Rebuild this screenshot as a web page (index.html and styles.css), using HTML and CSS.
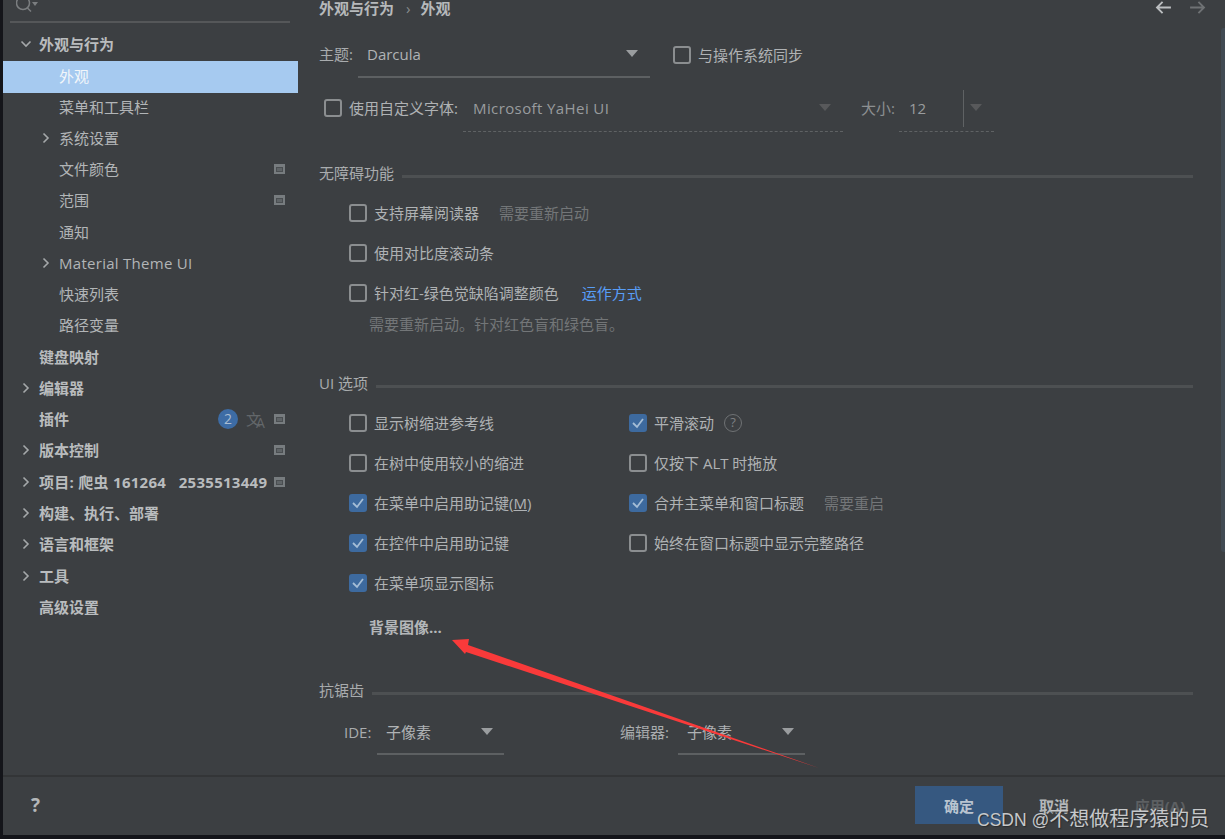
FILE: index.html
```html
<!DOCTYPE html>
<html lang="zh-CN">
<head>
    <meta charset="UTF-8">
    <title>设置 - 外观</title>
    <link rel="stylesheet" href="styles.css">
</head>
<body>
    <div class="window">
        <div class="window-body">
            <!-- Sidebar -->
            <div class="sidebar">
                <div class="search">
                    <svg class="search-icon" viewBox="0 0 26 16" xmlns="http://www.w3.org/2000/svg">
                        <circle cx="7" cy="3" r="6.5" fill="none" stroke="#7b7e80" stroke-width="1.5"/>
                        <path d="M11.5 8 L15 11.5" stroke="#7b7e80" stroke-width="1.5"/>
                        <path d="M16 2 H22 L19 6 Z" fill="#7b7e80"/>
                    </svg>
                </div>
                <div class="tree">
                    <div class="tree-row top"><svg class="chev" viewBox="0 0 12 12"><path d="M1.5 3.5 L6 8 L10.5 3.5"/></svg><span>外观与行为</span></div>
                    <div class="tree-row sub selected"><span>外观</span></div>
                    <div class="tree-row sub"><span>菜单和工具栏</span></div>
                    <div class="tree-row sub"><svg class="chev" viewBox="0 0 12 12"><path d="M3.5 1.5 L8 6 L3.5 10.5"/></svg><span>系统设置</span></div>
                    <div class="tree-row sub"><span>文件颜色</span><i class="marker"></i></div>
                    <div class="tree-row sub"><span>范围</span><i class="marker"></i></div>
                    <div class="tree-row sub"><span>通知</span></div>
                    <div class="tree-row sub"><svg class="chev" viewBox="0 0 12 12"><path d="M3.5 1.5 L8 6 L3.5 10.5"/></svg><span class="wide">Material Theme UI</span></div>
                    <div class="tree-row sub"><span>快速列表</span></div>
                    <div class="tree-row sub"><span>路径变量</span></div>
                    <div class="tree-row top"><span>键盘映射</span></div>
                    <div class="tree-row top"><svg class="chev" viewBox="0 0 12 12"><path d="M3.5 1.5 L8 6 L3.5 10.5"/></svg><span>编辑器</span></div>
                    <div class="tree-row top"><span>插件</span><b class="badge">2</b><span class="translate">文<em>A</em></span><i class="marker near"></i></div>
                    <div class="tree-row top"><svg class="chev" viewBox="0 0 12 12"><path d="M3.5 1.5 L8 6 L3.5 10.5"/></svg><span>版本控制</span><i class="marker"></i></div>
                    <div class="tree-row top"><svg class="chev" viewBox="0 0 12 12"><path d="M3.5 1.5 L8 6 L3.5 10.5"/></svg><span class="project wide">项目: 爬虫 161264   2535513449</span><i class="marker"></i></div>
                    <div class="tree-row top"><svg class="chev" viewBox="0 0 12 12"><path d="M3.5 1.5 L8 6 L3.5 10.5"/></svg><span>构建、执行、部署</span></div>
                    <div class="tree-row top"><svg class="chev" viewBox="0 0 12 12"><path d="M3.5 1.5 L8 6 L3.5 10.5"/></svg><span>语言和框架</span></div>
                    <div class="tree-row top"><svg class="chev" viewBox="0 0 12 12"><path d="M3.5 1.5 L8 6 L3.5 10.5"/></svg><span>工具</span></div>
                    <div class="tree-row top"><span>高级设置</span></div>
                </div>
            </div>

            <!-- Main Content -->
            <div class="content">
                <div class="topbar">
                    <div class="crumbs">外观与行为<span class="crumb-sep">›</span>外观</div>
                    <div class="nav-arrows">
                        <svg viewBox="0 0 18 14"><path d="M17 7 H2 M8 1 L2 7 L8 13" stroke="#bcbfc1"/></svg>
                        <svg viewBox="0 0 18 14"><path d="M1 7 H16 M10 1 L16 7 L10 13" stroke="#6f7274"/></svg>
                    </div>
                </div>

                <div class="form-row theme-row">
                    <span class="label theme-label">主题:</span>
                    <div class="select theme-select"><span>Darcula</span><i class="tri"></i></div>
                    <label class="check sync"><i class="box"></i>与操作系统同步</label>
                </div>

                <div class="form-row font-row">
                    <label class="check font-check"><i class="box"></i>使用自定义字体:</label>
                    <div class="select dashed font-select"><span class="wider">Microsoft YaHei UI</span><i class="tri dim"></i></div>
                    <span class="label size-label">大小:</span>
                    <div class="select dashed size-select"><span class="size-value">12</span><i class="divider"></i><i class="tri dim"></i></div>
                </div>

                <div class="section-title first">无障碍功能</div>
                <div class="options">
                    <label class="check"><i class="box"></i>支持屏幕阅读器<span class="hint">需要重新启动</span></label>
                    <label class="check"><i class="box"></i>使用对比度滚动条</label>
                    <label class="check"><i class="box"></i>针对红-绿色觉缺陷调整颜色<a class="link" href="#">运作方式</a></label>
                </div>
                <p class="note">需要重新启动。针对红色盲和绿色盲。</p>

                <div class="section-title ui">UI 选项</div>
                <div class="options-grid">
                    <label class="check"><i class="box"></i>显示树缩进参考线</label>
                    <label class="check"><i class="box on"><svg viewBox="0 0 18 18"><path d="M4 9 L8 13 L14 5"/></svg></i>平滑滚动<i class="help">?</i></label>
                    <label class="check"><i class="box"></i>在树中使用较小的缩进</label>
                    <label class="check"><i class="box"></i>仅按下 ALT 时拖放</label>
                    <label class="check"><i class="box on"><svg viewBox="0 0 18 18"><path d="M4 9 L8 13 L14 5"/></svg></i><span>在菜单中启用助记键(<u>M</u>)</span></label>
                    <label class="check"><i class="box on"><svg viewBox="0 0 18 18"><path d="M4 9 L8 13 L14 5"/></svg></i>合并主菜单和窗口标题<span class="hint">需要重启</span></label>
                    <label class="check"><i class="box on"><svg viewBox="0 0 18 18"><path d="M4 9 L8 13 L14 5"/></svg></i>在控件中启用助记键</label>
                    <label class="check"><i class="box"></i>始终在窗口标题中显示完整路径</label>
                    <label class="check"><i class="box on"><svg viewBox="0 0 18 18"><path d="M4 9 L8 13 L14 5"/></svg></i>在菜单项显示图标</label>
                </div>
                <div class="bg-image">背景图像...</div>

                <div class="section-title aa">抗锯齿</div>
                <div class="form-row aa-row">
                    <span class="label ide-label">IDE:</span>
                    <div class="select aa-select"><span>子像素</span><i class="tri"></i></div>
                    <span class="label editor-label">编辑器:</span>
                    <div class="select aa-select"><span>子像素</span><i class="tri"></i></div>
                </div>
            </div>
            <div class="scrollbar"></div>
        </div>

        <!-- Footer -->
        <div class="footer">
            <span class="help-mark">?</span>
            <div class="buttons">
                <button class="btn primary">确定</button>
                <button class="btn">取消</button>
                <button class="btn disabled">应用(A)</button>
            </div>
        </div>
    </div>

    <!-- annotation drawn over the screenshot -->
    <svg class="arrow" viewBox="0 0 1225 839" xmlns="http://www.w3.org/2000/svg">
        <polygon points="452,640 469,639 468,645 819,768 466,652 465,654" fill="#f93a3a"/>
    </svg>
    <div class="watermark"><span class="wm-latin">CSDN @</span>不想做程序猿的员</div>
</body>
</html>
```

FILE: styles.css
```css
* { margin: 0; padding: 0; box-sizing: border-box; }
html, body { height: 100%; overflow: hidden; }
body { background: #14151a; color: #b4b7b9; font-family: "Open Sans", "Noto Sans CJK SC", sans-serif; font-size: 15px; line-height: 24px; }
i, em { font-style: normal; }

/* Window */
.window { margin-left: 3px; height: 835px; background: #3c3f42; display: flex; flex-direction: column; }
.window-body { height: 775px; display: flex; overflow: hidden; position: relative; }
.scrollbar { position: absolute; right: 0; top: 28px; width: 4px; height: 524px; border-radius: 3px 0 0 3px; background: #414a53; }

/* Sidebar */
.sidebar { width: 295px; flex-shrink: 0; }
.search { height: 23px; margin: 0 8px 0 7px; border-bottom: 2px solid #555759; overflow: hidden; }
.search-icon { display: block; width: 26px; height: 16px; margin-left: 6px; }
.tree { padding-top: 5.4px; }
.tree-row { height: 31.28px; display: flex; align-items: center; padding-right: 13px; position: relative; color: #b2b5b7; }
.tree-row.top { padding-left: 36px; font-weight: 700; color: #b9bcbe; }
.tree-row.sub { padding-left: 56px; }
.tree-row.selected { height: 32px; margin: 1.3px 0 -2.02px; padding-bottom: 2px; background: #a6caf0; color: #f2f6fa; }
.chev { position: absolute; width: 12px; height: 12px; fill: none; stroke: #a5a8aa; stroke-width: 1.6; }
.tree-row.top .chev { left: 17px; }
.tree-row.sub .chev { left: 37px; }
.project { white-space: pre; }
.wide { letter-spacing: 0.28px; }
.wider { letter-spacing: 0.4px; }
.marker { margin-left: auto; width: 11px; height: 10px; border: 2px solid #777c7f; border-top-width: 3px; background: #5f6467; box-shadow: inset 0 0 0 1px #4a4e51; }
.marker.near { margin-left: 9px; }
.badge { margin-left: auto; width: 20px; height: 20px; border-radius: 50%; background: #3d6ca5; color: #a9bcd2; font-size: 14px; font-weight: 400; line-height: 20px; text-align: center; }
.translate { margin-left: 8px; width: 19px; font-size: 15px; font-weight: 400; color: #63676a; white-space: nowrap; letter-spacing: -5px; }
.translate em { font-size: 14px; position: relative; top: 3px; }

/* Main Content */
.content { flex: 1; padding-left: 21px; padding-right: 32px; }
.topbar { height: 16px; display: flex; justify-content: space-between; line-height: 16px; }
.crumbs { font-weight: 700; color: #b6b9bb; }
.crumb-sep { margin: 0 10px 0 12px; font-weight: 400; color: #8a8d8f; }
.nav-arrows { display: flex; gap: 17px; margin-top: 1px; margin-right: -13px; }
.nav-arrows svg { width: 17px; height: 13px; fill: none; stroke-width: 2; }

.form-row { display: flex; align-items: flex-start; }
.label { white-space: nowrap; color: #a9acae; }
.select { display: flex; align-items: flex-start; border-bottom: 2px solid #5d6062; padding-bottom: 9px; color: #b0b3b5; }
.select.dashed { border-bottom: 1px dashed #5f6264; padding-bottom: 11px; color: #999c9e; }
.tri { width: 0; height: 0; border-left: 6px solid transparent; border-right: 6px solid transparent; border-top: 7px solid #9a9d9f; margin-top: 8px; margin-left: auto; }
.tri.dim { border-top-color: #58595b; }

.theme-row { margin-top: 26px; }
.theme-label { width: 39px; }
.theme-select { width: 292px; padding-left: 9px; padding-right: 12px; padding-bottom: 10px; }
.sync { margin-left: 23px; margin-top: 1px; }
.font-row { margin-top: 18px; padding-left: 5px; }
.font-check { width: 139px; }
.font-select { width: 380px; padding-left: 10px; padding-right: 12px; }
.size-label { width: 38px; margin-left: 18px; color: #8c8f91; }
.size-select { width: 95px; padding-left: 10px; padding-right: 12px; }
.size-value { width: 54px; }
.divider { width: 1px; height: 37px; margin: -6px 0 -7px; background: #5f6264; }

.check { display: flex; align-items: center; height: 24px; gap: 7px; white-space: nowrap; color: #afb2b4; }
.box { width: 18px; height: 18px; flex-shrink: 0; border: 2px solid #8b8e90; border-radius: 3px; }
.box.on { background: #3d6a9f; border: 0; }
.box svg { display: block; width: 18px; height: 18px; fill: none; stroke: #a5bdd6; stroke-width: 1.8; }
.hint { margin-left: 13px; color: #737678; }
.link { margin-left: 16px; color: #589df6; text-decoration: none; }
.help { width: 18px; height: 18px; border: 1.5px solid #6f7274; border-radius: 50%; margin-left: 3px; color: #7d8082; font-size: 13px; line-height: 15px; text-align: center; }

.section-title { display: flex; align-items: center; gap: 8px; height: 24px; padding-bottom: 2px; color: #a9acae; }
.section-title::after { content: ""; flex: 1; height: 3px; margin-top: 6px; background: #4d5052; }
.section-title.first { margin-top: 30px; }
.section-title.ui { margin-top: 36px; }
.section-title.aa { margin-top: 40px; }

.options { display: flex; flex-direction: column; gap: 16px; margin-top: 15px; padding-left: 30px; }
.note { margin-top: 7px; padding-left: 50px; color: #737678; }
.options-grid { display: grid; grid-template-columns: 280px auto; row-gap: 16px; margin-top: 15px; padding-left: 30px; }
.bg-image { margin-top: 20px; padding-left: 50px; font-weight: 700; color: #b4b7b9; }

.aa-row { margin-top: 17px; padding-left: 25px; }
.ide-label { width: 33px; }
.aa-select { width: 127px; padding-left: 9px; padding-right: 11px; }
.editor-label { width: 58px; margin-left: 116px; }

/* Footer */
.footer { flex: 1; border-top: 2px solid #333537; padding: 9px 21px 0 28px; display: flex; justify-content: space-between; }
.help-mark { font-size: 19px; font-weight: 700; line-height: 38px; color: #b4b7b9; }
.buttons { display: flex; gap: 7px; }
.btn { width: 88px; height: 38px; border: 0; background: transparent; color: #b4b7b9; font: 700 15px "Open Sans", "Noto Sans CJK SC", sans-serif; }
.btn.primary { background: #365880; color: #b9c4d0; }
.btn.disabled { margin-left: 11px; color: #5d6062; }

/* Annotation */
.arrow { position: absolute; left: 0; top: 0; width: 1225px; height: 839px; pointer-events: none; }
.watermark { position: absolute; left: 977px; top: 804px; font-family: "Noto Sans CJK SC", sans-serif; font-size: 20px; line-height: 28px; white-space: nowrap; color: #c6c8ca; text-shadow: 1px 1px 1px #2a2c2e; }
.wm-latin { font-family: "Liberation Sans", sans-serif; font-size: 17.5px; }
```
